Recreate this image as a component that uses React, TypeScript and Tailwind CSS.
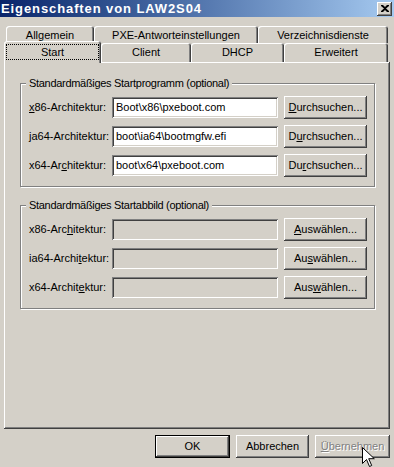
import React from 'react';

// Win2000 style bevels
const raised = 'shadow-[inset_-1px_-1px_#404040,inset_1px_1px_#fff,inset_-2px_-2px_#808080]';
const sunken = 'shadow-[inset_1px_1px_#808080,inset_-1px_-1px_#fff,inset_2px_2px_#404040,inset_-2px_-2px_#d4d0c8]';

type Part = { pre: string; key: string; post: string };

const Mnemonic = ({ p }: { p: Part }) => (
  <>
    {p.pre}
    <span className="underline underline-offset-[1px]">{p.key}</span>
    {p.post}
  </>
);

const Tab = ({ label, width }: { label: string; width: string }) => (
  <div
    className={`${width} h-full flex items-start justify-center pt-[3px] rounded-t-[3px] shadow-[inset_1px_1px_#fff,inset_-1px_0_#404040,inset_-2px_0_#808080]`}
  >
    {label}
  </div>
);

const Button = ({ children, disabled, isDefault, width = 'w-[83px]' }: { children: React.ReactNode; disabled?: boolean; isDefault?: boolean; width?: string }) => (
  <div
    className={`${width} h-[23px] flex items-center justify-center ${
      isDefault
        ? 'border border-black shadow-[inset_-1px_-1px_#404040,inset_1px_1px_#fff,inset_-2px_-2px_#808080]'
        : raised
    } ${disabled ? 'text-[#808080] [text-shadow:1px_1px_#fff]' : 'text-black'}`}
  >
    {children}
  </div>
);

type Row = { label: Part; value?: string; button: Part };

const GroupBox = ({ title, rows, disabled }: { title: string; rows: Row[]; disabled?: boolean }) => (
  <fieldset className="w-[355px] border border-[#808080] shadow-[inset_1px_1px_#fff,1px_1px_#fff] pt-[6px] pb-[9px]">
    <legend className="ml-[5px] px-[3px] bg-[#d4d0c8] tracking-[-0.3px]">{title}</legend>
    <div className="flex flex-col gap-[6px] pl-[8px]">
      {rows.map((r, i) => (
        <div key={i} className="flex items-center h-[23px]">
          <div className="w-[83px]">
            <Mnemonic p={r.label} />
          </div>
          <div
            className={`w-[166px] h-[21px] flex items-center px-[4px] ${disabled ? 'bg-[#d4d0c8]' : 'bg-white'} ${sunken}`}
          >
            {r.value}
          </div>
          <div className="ml-[6px]">
            <Button>
              <Mnemonic p={r.button} />
            </Button>
          </div>
        </div>
      ))}
    </div>
  </fieldset>
);

const programRows: Row[] = [
  { label: { pre: '', key: 'x', post: '86-Architektur:' }, value: 'Boot\\x86\\pxeboot.com', button: { pre: '', key: 'D', post: 'urchsuchen...' } },
  { label: { pre: '', key: 'j', post: 'a64-Architektur:' }, value: 'boot\\ia64\\bootmgfw.efi', button: { pre: 'D', key: 'u', post: 'rchsuchen...' } },
  { label: { pre: 'x64-Ar', key: 'c', post: 'hitektur:' }, value: 'boot\\x64\\pxeboot.com', button: { pre: 'Du', key: 'r', post: 'chsuchen...' } },
];

const imageRows: Row[] = [
  { label: { pre: 'x86-Arc', key: 'h', post: 'itektur:' }, button: { pre: '', key: 'A', post: 'uswählen...' } },
  { label: { pre: 'ia64-Archi', key: 't', post: 'ektur:' }, button: { pre: 'Au', key: 's', post: 'wählen...' } },
  { label: { pre: 'x64-Archit', key: 'e', post: 'ktur:' }, button: { pre: 'Aus', key: 'w', post: 'ählen...' } },
];

export default function App() {
  return (
    <div className="relative w-[394px] h-[467px] overflow-hidden bg-[#d4d0c8] text-black text-[11px] leading-[13px] font-['Liberation_Sans',Arial,sans-serif]">
      {/* Title bar */}
      <div className="h-[17px] flex items-center justify-between pl-[1px] pr-[2px] bg-linear-to-r from-[#0a246a] to-[#a6caf0]">
        <span className="text-white font-bold text-[13px] tracking-[0.9px]">Eigenschaften von LAW2S04</span>
        <div className={`w-[15px] h-[14px] bg-[#d4d0c8] flex items-center justify-center ${raised}`}>
          <svg width="8" height="7" viewBox="0 0 8 7">
            <path d="M0 0h2l2 2 2-2h2v1L5 3.5 8 6v1H6L4 5 2 7H0V6l3-2.5L0 1z" fill="#000" />
          </svg>
        </div>
      </div>

      {/* Tabs */}
      <div className="mt-[9px]">
        <div className="flex h-[17px] pl-[6px]">
          <Tab label="Allgemein" width="w-[88px]" />
          <Tab label="PXE-Antworteinstellungen" width="w-[164px]" />
          <Tab label="Verzeichnisdienste" width="w-[130px]" />
        </div>
        <div className="flex items-start h-[19px] pl-[4px]">
          <div className="relative z-10 w-[97px] h-[22px] -mt-[2px] bg-[#d4d0c8] rounded-t-[3px] p-[4px] shadow-[inset_1px_1px_#fff,inset_-1px_0_#404040,inset_-2px_0_#808080]">
            <div className="h-full flex items-center justify-center outline outline-1 outline-dotted outline-black -mx-[1px]">
              Start
            </div>
          </div>
          <Tab label="Client" width="w-[90px]" />
          <Tab label="DHCP" width="w-[93px]" />
          <Tab label="Erweitert" width="w-[104px]" />
        </div>
      </div>

      {/* Panel */}
      <div className={`ml-[4px] w-[386px] h-[367px] pl-[16px] pt-[15px] ${raised}`}>
        <GroupBox title="Standardmäßiges Startprogramm (optional)" rows={programRows} />
        <div className="h-[12px]" />
        <GroupBox title="Standardmäßiges Startabbild (optional)" rows={imageRows} disabled />
      </div>

      {/* Dialog buttons */}
      <div className="mt-[6px] flex justify-end gap-[6px] pr-[4px]">
        <Button isDefault width="w-[75px]">OK</Button>
        <Button width="w-[73px]">Abbrechen</Button>
        <Button disabled width="w-[75px]">
          <Mnemonic p={{ pre: '', key: 'Ü', post: 'bernehmen' }} />
        </Button>
      </div>

      {/* Mouse pointer */}
      <svg className="absolute left-[362px] top-[447px]" width="13" height="21" viewBox="0 0 13 21">
        <path d="M0.5 0.5v16l4-4 3 7 2.2-1-3-6.8h5.6z" fill="#fff" stroke="#000" strokeWidth="1" />
      </svg>
    </div>
  );
}
